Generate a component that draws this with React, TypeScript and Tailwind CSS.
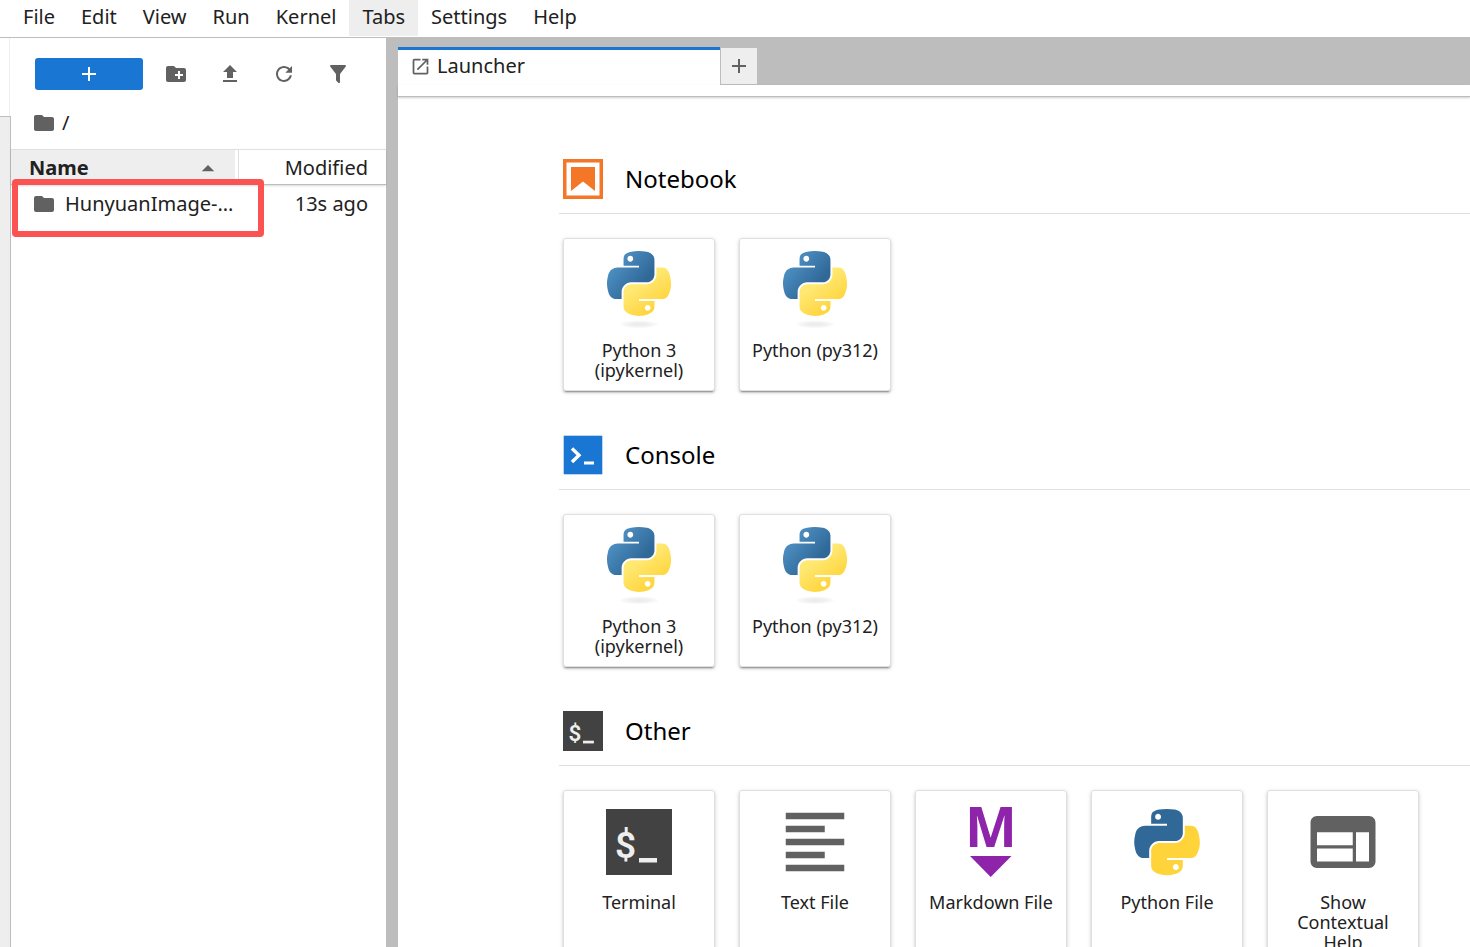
import React from "react";

const BLUE_PATH =
  "M54.919 0C50.335.022 45.958.413 42.106 1.095 30.76 3.099 28.7 7.295 28.7 15.032V25.251H55.513V28.657H18.638C10.845 28.657 4.022 33.341 1.888 42.251-.574 52.464-.683 58.837 1.888 69.501 3.793 77.439 8.345 83.095 16.138 83.095H25.356V70.845C25.356 61.995 33.013 54.188 42.106 54.188H68.888C76.342 54.188 82.294 48.05 82.294 40.563V15.032C82.294 7.766 76.164 2.307 68.888 1.095 64.282.328 59.502-.02 54.919 0ZM40.419 8.22C43.188 8.22 45.45 10.518 45.45 13.345 45.45 16.161 43.188 18.438 40.419 18.438 37.639 18.438 35.388 16.161 35.388 13.345 35.388 10.518 37.639 8.22 40.419 8.22Z";
const YELLOW_PATH =
  "M85.638 28.657V40.563C85.638 49.794 77.812 57.563 68.888 57.563H42.106C34.77 57.563 28.7 63.842 28.7 71.188V96.72C28.7 103.986 35.019 108.26 42.106 110.345 50.593 112.84 58.732 113.291 68.888 110.345 75.638 108.39 82.294 104.457 82.294 96.72V86.501H55.513V83.095H95.7C103.492 83.095 106.396 77.659 109.106 69.501 111.906 61.102 111.786 53.026 109.106 42.251 107.18 34.493 103.502 28.657 95.7 28.657ZM70.575 93.313C73.354 93.313 75.606 95.591 75.606 98.407 75.606 101.234 73.354 103.532 70.575 103.532 67.805 103.532 65.544 101.234 65.544 98.407 65.544 95.591 67.805 93.313 70.575 93.313Z";

function KernelIcon() {
  const id = React.useId();
  return (
    <svg viewBox="0 0 111 135" className="h-[78px] w-16 shrink-0" aria-hidden="true">
      <defs>
        <linearGradient id={id + "b"} x1="0" y1="0" x2="0.75" y2="0.65">
          <stop offset="0" stopColor="#5a9fd4" />
          <stop offset="1" stopColor="#306998" />
        </linearGradient>
        <linearGradient id={id + "y"} x1="0.75" y1="0.8" x2="0.4" y2="0.3">
          <stop offset="0" stopColor="#ffd43b" />
          <stop offset="1" stopColor="#ffe873" />
        </linearGradient>
        <radialGradient id={id + "s"}>
          <stop offset="0" stopColor="#b8b8b8" stopOpacity="0.28" />
          <stop offset="1" stopColor="#7f7f7f" stopOpacity="0" />
        </radialGradient>
      </defs>
      <ellipse cx="55.5" cy="127" rx="35" ry="7" fill={`url(#${id}s)`} />
      <path fill={`url(#${id}b)`} d={BLUE_PATH} />
      <path fill={`url(#${id}y)`} d={YELLOW_PATH} />
    </svg>
  );
}

function PythonFileIcon() {
  return (
    <svg viewBox="-10.5 -10 132 132" className="size-[78px] shrink-0" aria-hidden="true">
      <path fill="#306998" d={BLUE_PATH} />
      <path fill="#ffd43b" d={YELLOW_PATH} />
    </svg>
  );
}

function Glyph({ d, className, box = "0 0 24 24" }: { d: string; className: string; box?: string }) {
  return (
    <svg viewBox={box} className={"shrink-0 " + className} fill="currentColor" aria-hidden="true">
      <path d={d} />
    </svg>
  );
}

function TerminalIcon({ className }: { className: string }) {
  return (
    <svg viewBox="0 0 66 66" className={"shrink-0 " + className} aria-hidden="true">
      <rect width="66" height="66" fill="#424242" />
      <text x="9" y="49" fontFamily="Roboto, sans-serif" fontWeight="600" fontSize="37" fill="#eee">
        $
      </text>
      <rect x="33" y="49" width="18" height="4.5" fill="#eee" />
    </svg>
  );
}

function MarkdownIcon() {
  return (
    <svg viewBox="0 0 78 78" className="size-[78px] shrink-0 overflow-visible" fill="#8e24aa" aria-hidden="true">
      <text x="39" y="44" textAnchor="middle" fontFamily="'Open Sans', sans-serif" fontWeight="700" fontSize="55">
        M
      </text>
      <path d="M18 53H59.5L38.7 74Z" />
    </svg>
  );
}

const FOLDER = "M10 4H4c-1.1 0-1.99.9-1.99 2L2 18c0 1.1.9 2 2 2h16c1.1 0 2-.9 2-2V8c0-1.1-.9-2-2-2h-8l-2-2z";
const TEXT_LINES = "M15 15H3v2h12v-2zm0-8H3v2h12V7zM3 13h18v-2H3v2zm0 8h18v-2H3v2zM3 3v2h18V3H3z";
const HELP =
  "M20 4H4c-1.1 0-1.99.9-1.99 2L2 18c0 1.1.9 2 2 2h16c1.1 0 2-.9 2-2V6c0-1.1-.9-2-2-2zm-5 14H4v-4h11v4zm0-5H4V9h11v4zm5 5h-4V9h4v9z";
const LAUNCHER =
  "M19 19H5V5h7V3H5a2 2 0 00-2 2v14a2 2 0 002 2h14c1.1 0 2-.9 2-2v-7h-2v7zM14 3v2h3.59l-9.83 9.83 1.41 1.41L19 6.41V10h2V3h-7z";
const PLUS = "M19 13h-6v6h-2v-6H5v-2h6V5h2v6h6v2z";

const TOOLS = [
  {
    label: "New Folder",
    box: "0 0 24 24",
    d: "M20 6h-8l-2-2H4c-1.11 0-1.99.89-1.99 2L2 18c0 1.11.89 2 2 2h16c1.11 0 2-.89 2-2V8c0-1.11-.89-2-2-2zm-1 8h-3v3h-2v-3h-3v-2h3V9h2v3h3v2z",
  },
  { label: "Upload Files", box: "0 0 24 24", d: "M9 16h6v-6h4l-7-7-7 7h4zm-4 2h14v2H5z" },
  {
    label: "Refresh",
    box: "0 0 18 18",
    d: "M9 13.5c-2.49 0-4.5-2.01-4.5-4.5S6.51 4.5 9 4.5c1.24 0 2.36.52 3.17 1.33L10 8h5V3l-1.76 1.76C12.15 3.68 10.66 3 9 3 5.69 3 3.01 5.69 3.01 9S5.69 15 9 15c2.97 0 5.43-2.16 5.9-5h-1.52c-.46 2-2.24 3.5-4.38 3.5z",
  },
  {
    label: "Filter",
    box: "0 0 24 24",
    d: "M14 12v7.88c.04.3-.06.62-.29.83a1 1 0 01-1.41 0l-2.01-2.01a.99.99 0 01-.29-.83V12h-.03L4.21 4.62a1 1 0 01.17-1.4C4.57 3.08 4.78 3 5 3h14c.22 0 .43.08.62.22a1 1 0 01.17 1.4L14.03 12z",
  },
];

const MENUS = ["File", "Edit", "View", "Run", "Kernel", "Tabs", "Settings", "Help"];

function Card({ label, icon }: { label: string; icon: React.ReactNode }) {
  return (
    <button
      type="button"
      className="flex min-h-[153px] w-[152px] flex-col items-center justify-start rounded-[3px] border border-[#e0e0e0] bg-white px-2 pt-3 pb-2 shadow-[0_3px_1px_-2px_rgba(0,0,0,0.24),0_2px_2px_rgba(0,0,0,0.16),0_1px_5px_rgba(0,0,0,0.12)]"
    >
      {icon}
      <span className="mt-[11px] text-center text-lg leading-5 text-[#212121]">{label}</span>
    </button>
  );
}

function Section({ title, icon, children }: { title: string; icon: React.ReactNode; children: React.ReactNode }) {
  return (
    <section className="shrink-0">
      <header className="flex items-center gap-[22px] border-b border-[#e0e0e0] pb-3.5 pl-1">
        {icon}
        <h2 className="text-2xl leading-10 text-black">{title}</h2>
      </header>
      <div className="flex gap-6 pt-6 pl-1">{children}</div>
    </section>
  );
}

export default function App() {
  return (
    <div className="flex h-screen flex-col overflow-hidden bg-white font-['Noto_Sans',sans-serif] text-xl text-[#212121]">
      <nav className="flex h-[38px] shrink-0 items-start border-b border-[#bdbdbd] pl-2.5">
        {MENUS.map((m) => (
          <button
            key={m}
            type="button"
            className={"h-9 px-[13px] pb-0.5 leading-8 " + (m === "Tabs" ? "bg-[#eee]" : "")}
          >
            {m}
          </button>
        ))}
      </nav>
      <div className="flex min-h-0 flex-1">
        <div className="flex w-[11px] shrink-0 flex-col">
          <div className="mr-px h-[78px] border-r border-[#eee]" />
          <div className="flex-1 border-t border-r border-[#bdbdbd] bg-[#eee]" />
        </div>

        <aside className="relative w-[375px] shrink-0 bg-white">
          <div className="flex items-center pt-5 pl-6 text-[#616161]">
            <button
              type="button"
              aria-label="New Launcher"
              className="mr-1.5 flex h-8 w-[108px] items-center justify-center rounded-[3px] bg-[#1976d2] text-white"
            >
              <Glyph d={PLUS} className="size-6" />
            </button>
            {TOOLS.map((t) => (
              <button key={t.label} type="button" aria-label={t.label} className="flex w-[54px] justify-center">
                <Glyph d={t.d} box={t.box} className="size-6" />
              </button>
            ))}
          </div>
          <div className="flex h-[59px] items-center gap-1.5 pt-[7px] pl-[21px]">
            <Glyph d={FOLDER} className="size-6 text-[#616161]" />
            <span>/</span>
          </div>
          <table className="w-full table-fixed border-separate border-spacing-0">
            <thead className="shadow-[0_1px_2px_rgba(0,0,0,0.15)]">
              <tr className="h-9">
                <th scope="col" className="w-[224px] border-y border-t-[#e0e0e0] border-b-[#bdbdbd] bg-[#eee] p-0 pr-4 pl-[18px]">
                  <span className="flex items-center justify-between pt-0.5 leading-8 font-bold">
                    Name
                    <Glyph d="M7 14.5l5-5 5 5z" className="-mr-1 size-[30px] text-[#616161]" />
                  </span>
                </th>
                <th
                  scope="col"
                  className="border-y border-t-[#e0e0e0] border-b-[#bdbdbd] p-0 pl-[3px] text-right leading-8 font-normal"
                >
                  <span className="block border-l border-[#e0e0e0] pt-0.5 pr-[18px]">Modified</span>
                </th>
              </tr>
            </thead>
            <tbody>
              <tr className="h-9">
                <td className="p-0 pt-0.5 pl-[21px]">
                  <span className="flex items-center gap-[9px]">
                    <Glyph d={FOLDER} className="size-6 text-[#616161]" />
                    HunyuanImage-...
                  </span>
                </td>
                <td className="p-0 pt-0.5 pr-[18px] text-right">13s ago</td>
              </tr>
            </tbody>
          </table>
          <div className="pointer-events-none absolute top-[141px] left-px h-[58px] w-[252px] rounded-sm border-6 border-[#fb5252]" />
        </aside>

        <div className="w-3 shrink-0 bg-[#bdbdbd]" />

        <main className="flex min-w-0 flex-1 flex-col">
          <div className="flex h-[47px] shrink-0 bg-[#bdbdbd] pt-[9px]">
            <div className="flex w-[322px] items-center gap-1.5 border-t-3 border-[#1976d2] bg-white pb-[3px] pl-3">
              <Glyph d={LAUNCHER} className="size-[21px] text-[#616161]" />
              <span>Launcher</span>
            </div>
            <button
              type="button"
              aria-label="New tab"
              className="mt-px flex w-[37px] items-center justify-center border-b border-l border-[#bdbdbd] bg-[#eee] text-[#616161]"
            >
              <Glyph d={PLUS} className="size-6" />
            </button>
          </div>
          <div className="h-3 shrink-0 border-b border-[#bdbdbd] shadow-[0_1px_2px_rgba(0,0,0,0.2)]" />
          <div className="flex min-h-0 flex-1 flex-col gap-11 overflow-hidden pt-[62px] pl-[161px]">
            <Section
              title="Notebook"
              icon={
                <svg viewBox="0 0 40 40" className="size-10" fill="#f37726" aria-hidden="true">
                  <path fillRule="evenodd" d="M0 0H40V40H0ZM3.5 3.5V36.5H36.5V3.5Z" />
                  <path d="M8 8H32V32L20 22.5 8 32Z" />
                </svg>
              }
            >
              <Card label="Python 3 (ipykernel)" icon={<KernelIcon />} />
              <Card label="Python (py312)" icon={<KernelIcon />} />
            </Section>
            <Section
              title="Console"
              icon={
                <svg viewBox="0 0 40 40" className="size-10" aria-hidden="true">
                  <rect x="0.7" y="0.7" width="38.6" height="38.6" fill="#1976d2" />
                  <path d="M9 13.5L16 20.2 9 27" fill="none" stroke="#fff" strokeWidth="3.4" />
                  <rect x="21" y="26.5" width="10" height="3" fill="#fff" />
                </svg>
              }
            >
              <Card label="Python 3 (ipykernel)" icon={<KernelIcon />} />
              <Card label="Python (py312)" icon={<KernelIcon />} />
            </Section>
            <Section title="Other" icon={<TerminalIcon className="size-10" />}>
              <Card label="Terminal" icon={<TerminalIcon className="my-1.5 size-[66px]" />} />
              <Card label="Text File" icon={<Glyph d={TEXT_LINES} className="size-[78px] text-[#616161]" />} />
              <Card label="Markdown File" icon={<MarkdownIcon />} />
              <Card label="Python File" icon={<PythonFileIcon />} />
              <Card label="Show Contextual Help" icon={<Glyph d={HELP} className="size-[78px] text-[#616161]" />} />
            </Section>
          </div>
        </main>
      </div>
    </div>
  );
}
